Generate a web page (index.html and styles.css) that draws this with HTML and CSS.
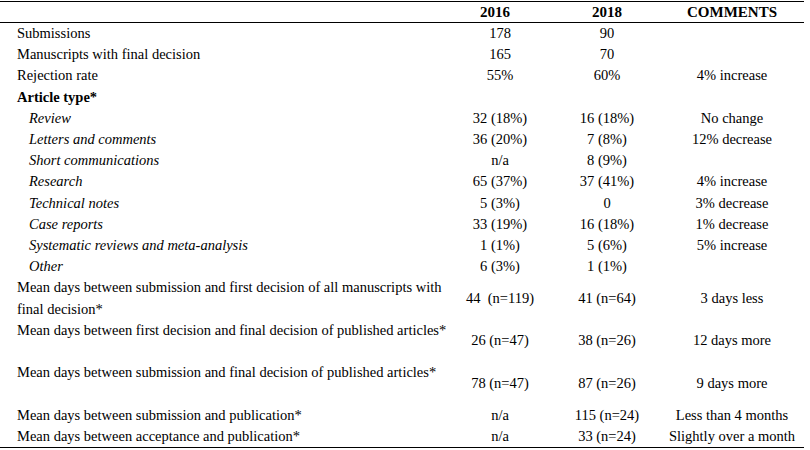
FILE: index.html
```html
<!DOCTYPE html>
<html>
<head>
<meta charset="utf-8">
<link rel="stylesheet" href="styles.css">
</head>
<body>
<table class="stats">
  <colgroup>
    <col class="c-label">
    <col class="c-y1">
    <col class="c-y2">
    <col class="c-com">
  </colgroup>
  <thead>
    <tr class="head">
      <th class="lab"></th>
      <th class="h-y1">2016</th>
      <th>2018</th>
      <th>COMMENTS</th>
    </tr>
  </thead>
  <tbody>
    <tr><td class="lab">Submissions</td><td>178</td><td>90</td><td></td></tr>
    <tr><td class="lab">Manuscripts with final decision</td><td>165</td><td>70</td><td></td></tr>
    <tr><td class="lab">Rejection rate</td><td>55%</td><td>60%</td><td>4% increase</td></tr>
    <tr><td class="lab bold">Article type*</td><td></td><td></td><td></td></tr>
    <tr><td class="lab sub">Review</td><td>32 (18%)</td><td>16 (18%)</td><td>No change</td></tr>
    <tr><td class="lab sub">Letters and comments</td><td>36 (20%)</td><td>7 (8%)</td><td>12% decrease</td></tr>
    <tr><td class="lab sub">Short communications</td><td>n/a</td><td>8 (9%)</td><td></td></tr>
    <tr><td class="lab sub">Research</td><td>65 (37%)</td><td>37 (41%)</td><td>4% increase</td></tr>
    <tr><td class="lab sub">Technical notes</td><td>5 (3%)</td><td>0</td><td>3% decrease</td></tr>
    <tr><td class="lab sub">Case reports</td><td>33 (19%)</td><td>16 (18%)</td><td>1% decrease</td></tr>
    <tr><td class="lab sub">Systematic reviews and meta-analysis</td><td>1 (1%)</td><td>5 (6%)</td><td>5% increase</td></tr>
    <tr><td class="lab sub">Other</td><td>6 (3%)</td><td>1 (1%)</td><td></td></tr>
    <tr><td class="lab">Mean days between submission and first decision of all manuscripts with<br>final decision*</td><td>44&nbsp; (n=119)</td><td>41 (n=64)</td><td>3 days less</td></tr>
    <tr><td class="lab">Mean days between first decision and final decision of published articles*<br>&nbsp;</td><td>26 (n=47)</td><td>38 (n=26)</td><td>12 days more</td></tr>
    <tr><td class="lab">Mean days between submission and final decision of published articles*<br>&nbsp;</td><td>78 (n=47)</td><td>87 (n=26)</td><td>9 days more</td></tr>
    <tr><td class="lab">Mean days between submission and publication*</td><td>n/a</td><td>115 (n=24)</td><td>Less than 4 months</td></tr>
    <tr class="last"><td class="lab">Mean days between acceptance and publication*</td><td>n/a</td><td>33 (n=24)</td><td>Slightly over a month</td></tr>
  </tbody>
</table>
</body>
</html>
```

FILE: styles.css
```css
html, body {
  margin: 0;
  padding: 0;
  background: #ffffff;
}
body {
  font-family: "Liberation Serif", "Times New Roman", serif;
  font-size: 14.5px;
  color: #000000;
}
.stats {
  width: 804px;
  margin-top: 1px;
  border-collapse: collapse;
  table-layout: fixed;
  border-top: 1px solid #000;
  border-bottom: 1px solid #000;
}
.c-label { width: 446px; }
.c-y1 { width: 108px; }
.c-y2 { width: 106px; }
.c-com { width: 144px; }
.stats th, .stats td {
  padding: 0;
  text-align: center;
  vertical-align: middle;
  line-height: 21.2px;
  white-space: nowrap;
}
.stats .head th {
  height: 20px;
  line-height: 20px;
  font-size: 15px;
  font-weight: bold;
  border-bottom: 1px solid #000;
}
.stats .head th.h-y1 {
  padding-right: 10px;
}
.stats td.lab {
  text-align: left;
  padding-left: 17px;
  vertical-align: top;
  line-height: 21.2px;
}
.stats td.sub {
  padding-left: 29px;
  font-style: italic;
}
.stats td.bold {
  font-weight: bold;
}
```
